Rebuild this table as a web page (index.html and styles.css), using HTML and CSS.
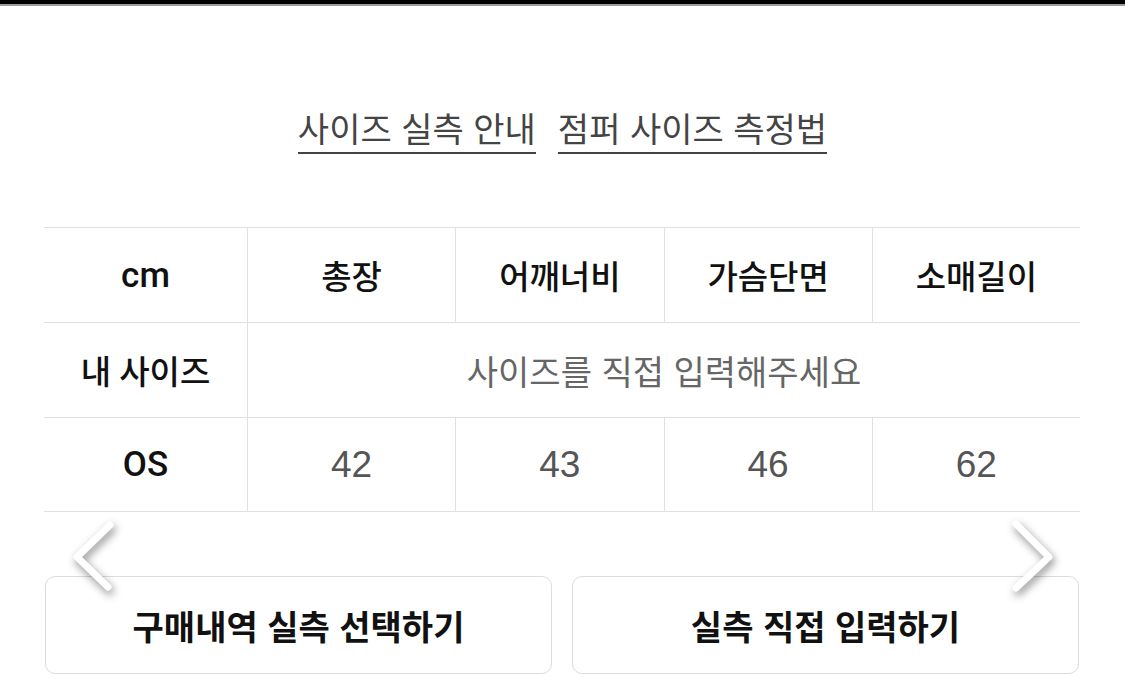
FILE: index.html
```html
<!DOCTYPE html>
<html lang="ko">
<head>
<meta charset="utf-8">
<title>사이즈</title>
<link rel="stylesheet" href="styles.css">
</head>
<body>
<div class="page">
  <div class="topbar"></div>
  <div class="guide">
    <a class="guide-link">사이즈 실측 안내</a>
    <a class="guide-link">점퍼 사이즈 측정법</a>
  </div>
  <div class="size-table">
    <div class="cell head first latin">cm</div>
    <div class="cell head">총장</div>
    <div class="cell head">어깨너비</div>
    <div class="cell head">가슴단면</div>
    <div class="cell head">소매길이</div>

    <div class="cell head first">내 사이즈</div>
    <div class="cell placeholder span4">사이즈를 직접 입력해주세요</div>

    <div class="cell head first last latin">OS</div>
    <div class="cell value last">42</div>
    <div class="cell value last">43</div>
    <div class="cell value last">46</div>
    <div class="cell value last">62</div>
  </div>
  <div class="actions">
    <button class="btn">구매내역 실측 선택하기</button>
    <button class="btn">실측 직접 입력하기</button>
  </div>
  <svg class="chev chev-left" width="60" height="90" viewBox="0 0 60 90">
    <polyline points="42,12 9,44 40,74" />
  </svg>
  <svg class="chev chev-right" width="60" height="90" viewBox="0 0 60 90">
    <polyline points="16,12 49,45 16,76" />
  </svg>
</div>
</body>
</html>
```
FILE: styles.css
```css
* { box-sizing: border-box; }
html, body { margin: 0; padding: 0; background: #fff; }
body {
  font-family: "Liberation Sans", "Noto Sans CJK KR", sans-serif;
  width: 1125px;
  height: 678px;
  overflow: hidden;
}
.page {
  position: relative;
  width: 1125px;
  height: 678px;
  display: flex;
  flex-direction: column;
}
.topbar {
  height: 4px;
  background: #000;
  border-bottom: 2px solid #9a9a9a;
  box-sizing: content-box;
}
.guide {
  display: flex;
  justify-content: center;
  gap: 22px;
  margin-top: 102px;
}
.guide-link {
  font-family: "Noto Sans CJK KR", sans-serif;
  font-size: 34px;
  line-height: 40px;
  color: #444;
  padding-bottom: 4px;
  border-bottom: 2px solid #444;
  text-decoration: none;
}
.size-table {
  margin: 73px 0 0 44px;
  width: 1036px;
  display: grid;
  grid-template-columns: 203px repeat(4, 1fr);
  grid-auto-rows: 95px;
}
.cell {
  display: flex;
  align-items: center;
  justify-content: center;
  border-top: 1px solid #e0e0e0;
  border-left: 1px solid #e0e0e0;
  font-size: 33px;
}
.cell.first { border-left: none; }
.cell.last { border-bottom: 1px solid #e0e0e0; }
.head {
  font-family: "Roboto", "Noto Sans CJK KR", sans-serif;
  font-weight: 500;
  color: #111;
}
.head.latin { font-size: 35px; }
.placeholder {
  grid-column: span 4;
  font-family: "Noto Sans CJK KR", sans-serif;
  font-size: 34px;
  color: #666;
  font-weight: 400;
}
.value {
  color: #555;
  font-weight: 400;
  font-size: 37px;
}
.actions {
  display: flex;
  gap: 20px;
  margin: 64px 46px 0 45px;
}
.btn {
  flex: 1;
  height: 98px;
  background: #fff;
  border: 1px solid #dcdcdc;
  border-radius: 10px;
  font-family: "Noto Sans CJK KR", sans-serif;
  font-size: 34px;
  font-weight: 700;
  color: #111;
  padding: 0;
}
.chev {
  position: absolute;
  overflow: visible;
  filter: drop-shadow(2px 4px 4px rgba(0,0,0,0.45));
}
.chev polyline {
  fill: none;
  stroke: #fff;
  stroke-width: 7;
  stroke-linecap: round;
  stroke-linejoin: round;
}
.chev-left { left: 68px; top: 513px; }
.chev-right { left: 1000px; top: 512px; }
```
